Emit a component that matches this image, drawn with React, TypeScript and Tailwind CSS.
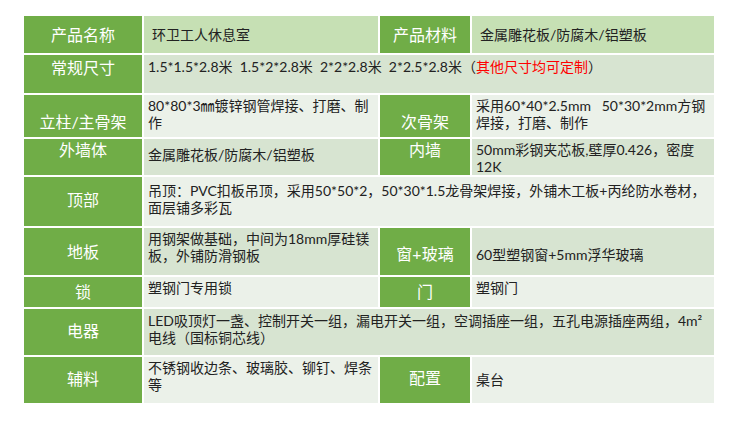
import React from "react";

const FONT = "font-['Lato','Noto_Sans_CJK_SC',sans-serif]";

type VAlign = "start" | "center" | "end";

function Label({
  children,
  v = "center",
  cls = "",
}: {
  children: React.ReactNode;
  v?: VAlign;
  cls?: string;
}) {
  const va =
    v === "start" ? "items-start" : v === "end" ? "items-end" : "items-center";
  return (
    <div
      className={`flex ${va} justify-center bg-[#70ad47] text-white text-[16px] leading-[20px] font-normal ${cls}`}
    >
      <span>{children}</span>
    </div>
  );
}

function Cell({
  children,
  bg,
  v = "start",
  cls = "",
}: {
  children: React.ReactNode;
  bg: string;
  v?: VAlign;
  cls?: string;
}) {
  const va =
    v === "start" ? "items-start" : v === "end" ? "items-end" : "items-center";
  return (
    <div
      className={`flex ${va} ${bg} text-[#222222] text-[14px] leading-[17px] pl-[4px] ${cls}`}
    >
      <div>{children}</div>
    </div>
  );
}

const ROW1 = "bg-[#c6e0b4]";
const DARK = "bg-[#d7e4d1]";
const LIGHT = "bg-[#ebf1e9]";

export default function App() {
  return (
    <div className={`w-[750px] h-[422px] bg-white pt-[16px] pl-[24px] ${FONT}`}>
      <div className="grid grid-cols-[118px_234px_90px_242px] grid-rows-[37px_38px_42px_36px_49px_47px_30px_46px_46px] gap-[2px] bg-white w-max">
        {/* Row 1 */}
        <Label>产品名称</Label>
        <Cell bg={ROW1} v="center" cls="pl-[8px]">
          环卫工人休息室
        </Cell>
        <Label>产品材料</Label>
        <Cell bg={ROW1} v="center" cls="pl-[8px]">
          金属雕花板/防腐木/铝塑板
        </Cell>

        {/* Row 2 */}
        <Label v="start" cls="pt-[3px]">
          常规尺寸
        </Label>
        <Cell bg={DARK} cls="col-span-3 pt-[3px]">
          <span className="whitespace-pre">
            {"1.5*1.5*2.8米  1.5*2*2.8米  2*2*2.8米  2*2.5*2.8米（"}
            <span className="text-[#ff0000]">其他尺寸均可定制</span>）
          </span>
        </Cell>

        {/* Row 3 */}
        <Label v="end" cls="pb-[5px]">
          立柱/主骨架
        </Label>
        <Cell bg={LIGHT} cls="pt-[2px]">
          <div className="whitespace-nowrap">80*80*3㎜镀锌钢管焊接、打磨、制</div>
          <div>作</div>
        </Cell>
        <Label v="end" cls="pb-[5px]">
          次骨架
        </Label>
        <Cell bg={LIGHT} cls="pt-[2px]">
          <div className="whitespace-pre">{"采用60*40*2.5mm   50*30*2mm方钢"}</div>
          <div>焊接，打磨、制作</div>
        </Cell>

        {/* Row 4 */}
        <Label v="start" cls="pt-[1px]">
          外墙体
        </Label>
        <Cell bg={DARK} cls="pt-[7px]">
          金属雕花板/防腐木/铝塑板
        </Cell>
        <Label v="start" cls="pt-[1px]">
          内墙
        </Label>
        <Cell bg={DARK} cls="pt-[2px]">
          <div className="whitespace-nowrap">50mm彩钢夹芯板,壁厚0.426，密度</div>
          <div>12K</div>
        </Cell>

        {/* Row 5 */}
        <Label cls="pb-[4px]">顶部</Label>
        <Cell bg={LIGHT} cls="col-span-3 pt-[5px]">
          <div className="whitespace-nowrap">
            吊顶：PVC扣板吊顶，采用50*50*2，50*30*1.5龙骨架焊接，外铺木工板+丙纶防水卷材，
          </div>
          <div>面层铺多彩瓦</div>
        </Cell>

        {/* Row 6 */}
        <Label>地板</Label>
        <Cell bg={DARK} cls="pt-[2px]">
          <div className="whitespace-nowrap">用钢架做基础，中间为18mm厚硅镁</div>
          <div>板，外铺防滑钢板</div>
        </Cell>
        <Label cls="pt-[4px]">窗+玻璃</Label>
        <Cell bg={DARK} v="center" cls="pt-[6px]">
          60型塑钢窗+5mm浮华玻璃
        </Cell>

        {/* Row 7 */}
        <Label>锁</Label>
        <Cell bg={LIGHT} cls="pt-[2px]">
          塑钢门专用锁
        </Cell>
        <Label>门</Label>
        <Cell bg={LIGHT} cls="pt-[2px]">
          塑钢门
        </Cell>

        {/* Row 8 */}
        <Label cls="pb-[2px]">电器</Label>
        <Cell bg={DARK} cls="col-span-3 pt-[3px]">
          <div className="whitespace-nowrap">
            LED吸顶灯一盏、控制开关一组，漏电开关一组，空调插座一组，五孔电源插座两组，4m²
          </div>
          <div>电线（国标铜芯线）</div>
        </Cell>

        {/* Row 9 */}
        <Label cls="pb-[2px]">辅料</Label>
        <Cell bg={LIGHT} cls="pt-[2px]">
          <div className="whitespace-nowrap">不锈钢收边条、玻璃胶、铆钉、焊条</div>
          <div>等</div>
        </Cell>
        <Label cls="pb-[4px]">配置</Label>
        <Cell bg={LIGHT} v="center" cls="pb-[2px]">
          桌台
        </Cell>
      </div>
    </div>
  );
}
